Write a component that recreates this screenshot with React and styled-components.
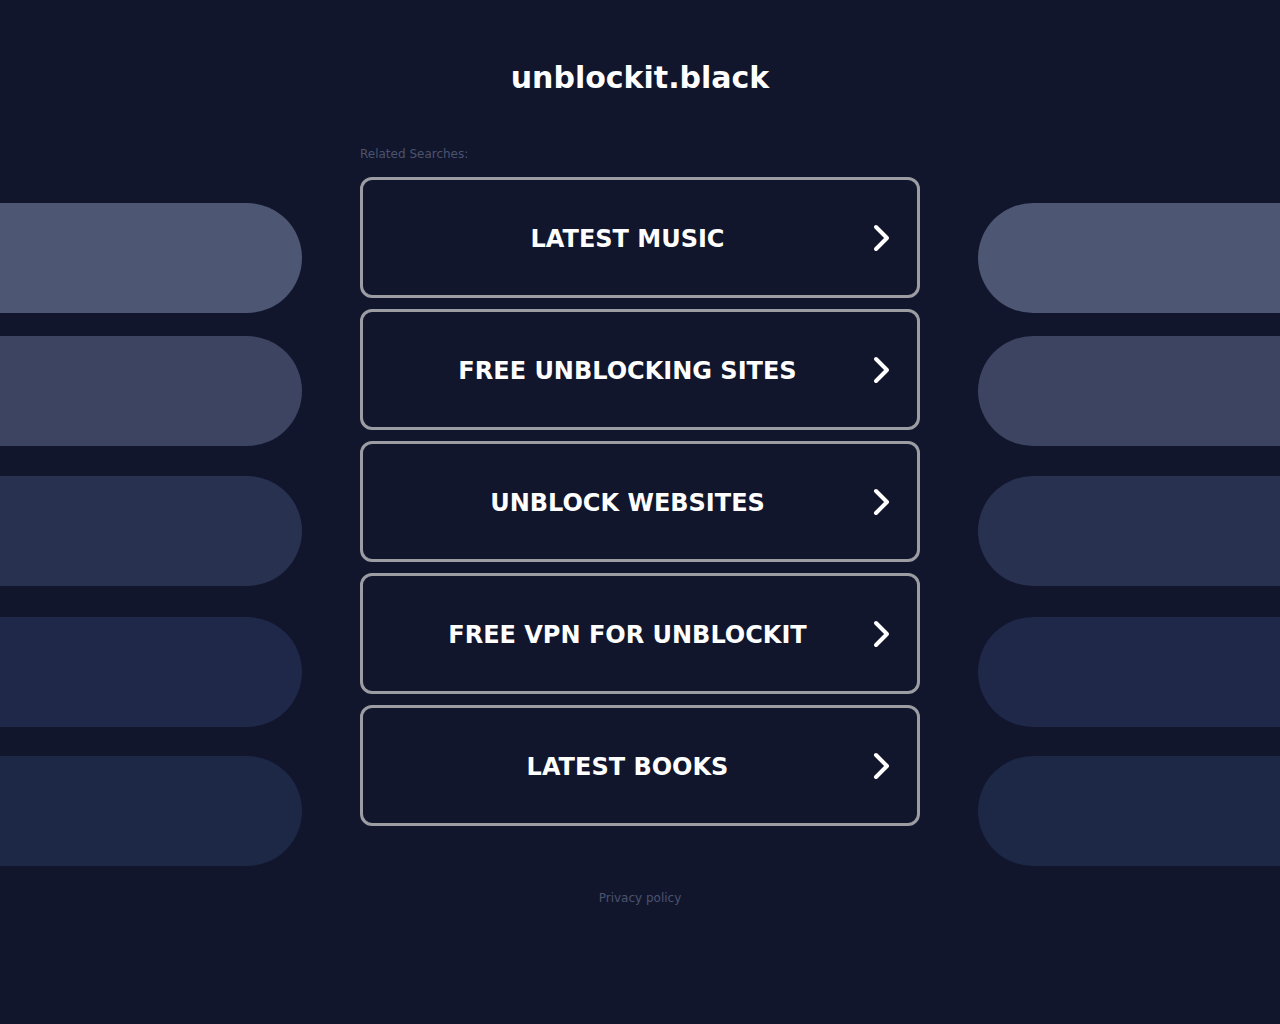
import React from 'react';
import styled, { createGlobalStyle } from 'styled-components';

const GlobalStyle = createGlobalStyle`
  html, body {
    margin: 0;
    padding: 0;
    background: #11162c;
    font-family: "DejaVu Sans", "Liberation Sans", sans-serif;
  }
`;

const Page = styled.div`
  min-height: 1024px;
  display: flex;
  flex-direction: column;
  background: #11162c;
`;

const Title = styled.h1`
  margin: 60px 0 49px;
  font-size: 30px;
  line-height: 36px;
  font-weight: bold;
  color: #ffffff;
  text-align: center;
`;

const Main = styled.div`
  display: grid;
  grid-template-columns: 1fr 560px 1fr;
  column-gap: 58px;
`;

const Side = styled.div`
  display: flex;
  flex-direction: column;
  padding-top: 58px;
`;

const Pill = styled.div`
  height: 110px;
  margin-top: ${p => p.$gap}px;
  background: ${p => p.$color};
  border-radius: ${p => (p.$right ? '56px 0 0 56px' : '0 56px 56px 0')};
`;

const Center = styled.div`
  display: flex;
  flex-direction: column;
`;

const Label = styled.div`
  padding-top: 1px;
  font-size: 12px;
  line-height: 16px;
  color: #4b536f;
  margin-bottom: 15px;
`;

const List = styled.div`
  display: flex;
  flex-direction: column;
  gap: 11px;
`;

const Button = styled.a`
  box-sizing: border-box;
  height: 121px;
  display: flex;
  align-items: center;
  gap: 4px;
  padding: 0 25px 0 24px;
  border: 3px solid #9c9da2;
  border-radius: 12px;
  color: #ffffff;
  text-decoration: none;
  cursor: pointer;
`;

const ButtonText = styled.span`
  flex: 1;
  padding-top: 2px;
  text-align: center;
  font-size: 24px;
  font-weight: bold;
`;

const Footer = styled.div`
  margin-top: 24px;
  text-align: center;
  font-size: 12px;
  line-height: 16px;
  color: #4b536f;
`;

const pills = [
  { gap: 0, color: '#4d5672' },
  { gap: 23, color: '#3c4461' },
  { gap: 30, color: '#283150' },
  { gap: 31, color: '#1f2848' },
  { gap: 29, color: '#1d2746' },
];

const links = [
  'LATEST MUSIC',
  'FREE UNBLOCKING SITES',
  'UNBLOCK WEBSITES',
  'FREE VPN FOR UNBLOCKIT',
  'LATEST BOOKS',
];

const Chevron = () => (
  <svg width="20" height="28" viewBox="0 0 20 28">
    <path d="M4 3 L15 14 L4 25" fill="none" stroke="#ffffff" strokeWidth="4" strokeLinecap="round" strokeLinejoin="round" />
  </svg>
);

const App = () => (
  <Page>
    <GlobalStyle />
    <Title>unblockit.black</Title>
    <Main>
      <Side>
        {pills.map((p, i) => <Pill key={i} $gap={p.gap} $color={p.color} />)}
      </Side>
      <Center>
        <Label>Related Searches:</Label>
        <List>
          {links.map(text => (
            <Button key={text}>
              <ButtonText>{text}</ButtonText>
              <Chevron />
            </Button>
          ))}
        </List>
      </Center>
      <Side>
        {pills.map((p, i) => <Pill key={i} $gap={p.gap} $color={p.color} $right />)}
      </Side>
    </Main>
    <Footer>Privacy policy</Footer>
  </Page>
);

export default App;
